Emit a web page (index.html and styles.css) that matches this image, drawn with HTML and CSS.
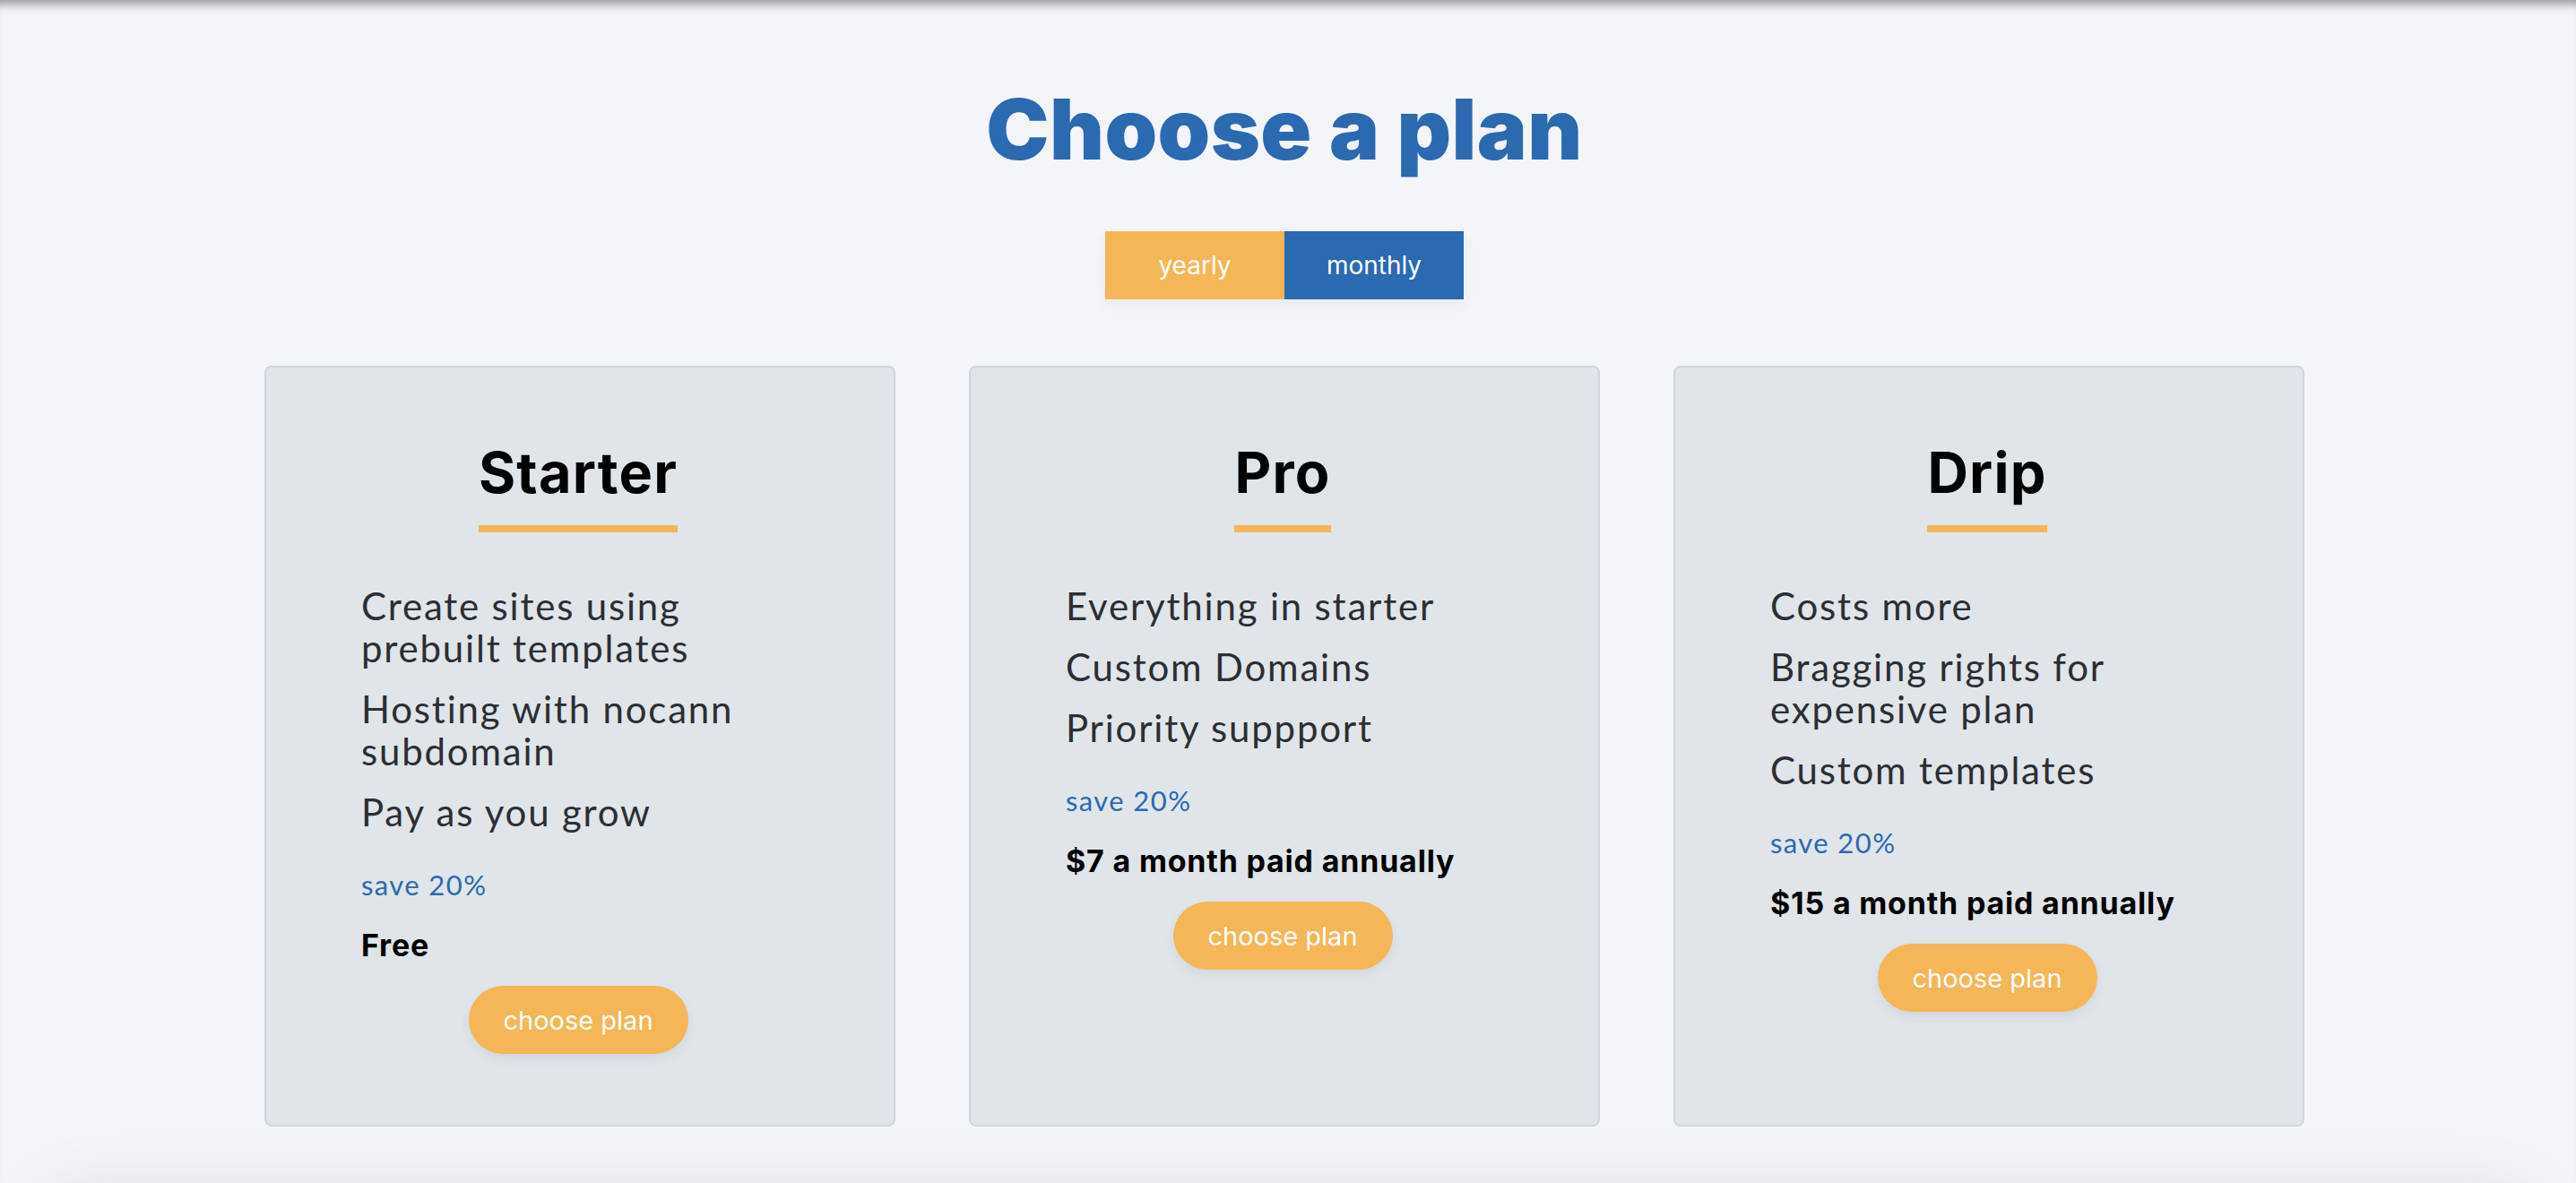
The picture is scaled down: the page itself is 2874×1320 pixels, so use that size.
FILE: index.html
```html
<!DOCTYPE html>
<html lang="en">
<head>
<meta charset="utf-8">
<title>Choose a plan</title>
<link rel="stylesheet" href="styles.css">
</head>
<body>
<main class="page">
  <h1 class="heading">Choose a plan</h1>
  <div class="toggle">
    <button class="toggle-btn toggle-yearly">yearly</button>
    <button class="toggle-btn toggle-monthly">monthly</button>
  </div>
  <section class="plans">
    <article class="card">
      <h2 class="card-title">Starter</h2>
      <ul class="features">
        <li>Create sites using prebuilt templates</li>
        <li>Hosting with nocann subdomain</li>
        <li>Pay as you grow</li>
      </ul>
      <p class="save">save 20%</p>
      <p class="price">Free</p>
      <button class="choose">choose plan</button>
    </article>
    <article class="card">
      <h2 class="card-title">Pro</h2>
      <ul class="features">
        <li>Everything in starter</li>
        <li>Custom Domains</li>
        <li>Priority suppport</li>
      </ul>
      <p class="save">save 20%</p>
      <p class="price">$7 a month paid annually</p>
      <button class="choose">choose plan</button>
    </article>
    <article class="card">
      <h2 class="card-title">Drip</h2>
      <ul class="features">
        <li>Costs more</li>
        <li>Bragging rights for expensive plan</li>
        <li>Custom templates</li>
      </ul>
      <p class="save">save 20%</p>
      <p class="price">$15 a month paid annually</p>
      <button class="choose">choose plan</button>
    </article>
  </section>
  <div class="footer-sheet"></div>
</main>
</body>
</html>
```

FILE: styles.css
```css
html, body {
  margin: 0;
  padding: 0;
  background: #f4f5f9;
}

body {
  font-family: "Lato", "Liberation Sans", sans-serif;
  overflow: hidden;
}

.page {
  display: flex;
  flex-direction: column;
  align-items: center;
  padding: 87px 8px 0 0;
  box-shadow: inset 0 14px 12px -10px rgba(60, 60, 70, 0.55);
  min-height: 1400px;
}

.heading {
  margin: 0;
  font-family: "Inter", "Liberation Sans", sans-serif;
  font-weight: 900;
  font-size: 94px;
  line-height: 114px;
  letter-spacing: 0.4px;
  color: #2b69b1;
}

.toggle {
  display: flex;
  margin-top: 57px;
  box-shadow: 0 6px 14px rgba(40, 50, 80, 0.06);
}

.toggle-btn {
  width: 200px;
  height: 76px;
  border: 0;
  margin: 0;
  padding: 0;
  font-family: "Inter", "Liberation Sans", sans-serif;
  font-size: 28px;
  color: #ffffff;
}

.toggle-yearly { background: #f4b657; }
.toggle-monthly { background: #2b69b1; }

.plans {
  display: grid;
  grid-template-columns: repeat(3, 704px);
  column-gap: 82px;
  margin-top: 74px;
}

.card {
  display: flex;
  flex-direction: column;
  align-items: flex-start;
  background: #e0e5e9;
  border: 2px solid #cfd6db;
  border-radius: 8px;
  padding: 79px 110px 79px 106px;
}

.card-title {
  align-self: center;
  margin: 0;
  font-family: "Inter", "Liberation Sans", sans-serif;
  font-weight: 700;
  font-size: 63px;
  line-height: 76px;
  letter-spacing: 1.2px;
  color: #000;
  border-bottom: 8px solid #f4b657;
  padding-bottom: 21px;
}

.features {
  list-style: none;
  margin: 59px 0 0 0;
  padding: 0;
  font-size: 42px;
  line-height: 47px;
  letter-spacing: 1.8px;
  color: #2c2e33;
}

.features li + li {
  margin-top: 21px;
}

.save {
  margin: 39px 0 0 0;
  font-size: 31px;
  line-height: 36px;
  letter-spacing: 1.4px;
  color: #2b69b1;
}

.price {
  margin: 30px 0 0 0;
  font-family: "Inter", "Liberation Sans", sans-serif;
  font-weight: 700;
  font-size: 34px;
  line-height: 40px;
  letter-spacing: 0.8px;
  color: #000;
}

.choose {
  align-self: center;
  margin-top: 25px;
  width: 245px;
  height: 76px;
  border: 0;
  border-radius: 38px;
  background: #f4b657;
  color: #fff;
  font-family: "Inter", "Liberation Sans", sans-serif;
  font-size: 29px;
  box-shadow: 0 5px 12px rgba(40, 50, 80, 0.08);
}

.footer-sheet {
  align-self: stretch;
  margin: 72px 30px 0 36px;
  height: 200px;
  border-radius: 60px;
  background: #f4f5f9;
  box-shadow: 0 0 70px rgba(70, 50, 80, 0.13);
}
```
